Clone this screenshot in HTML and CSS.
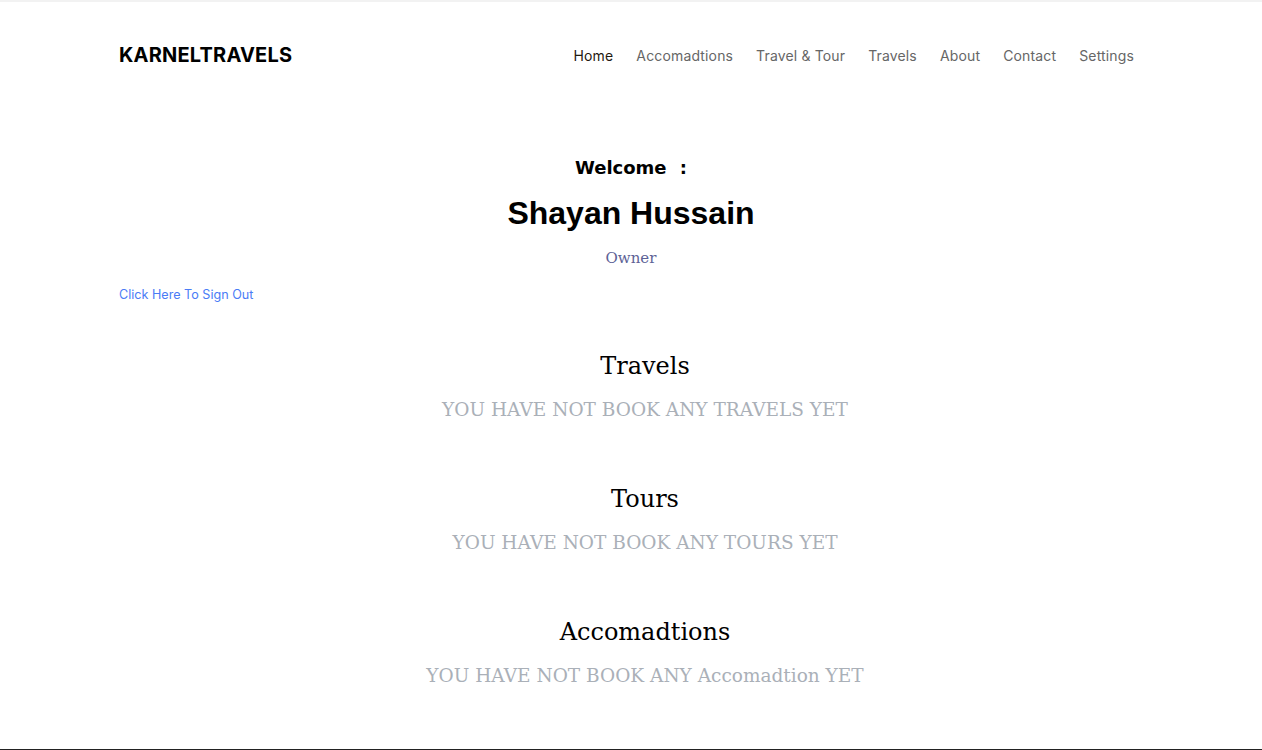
FILE: index.html
```html
<!DOCTYPE html>
<html lang="en">
<head>
<meta charset="utf-8">
<title>KarnelTravels - Profile</title>
<link rel="stylesheet" href="styles.css">
</head>
<body>
<header class="site-header">
  <div class="container header-row">
    <a class="logo" href="#">KARNELTRAVELS</a>
    <nav class="nav">
      <a class="nav-link active" href="#">Home</a>
      <a class="nav-link" href="#">Accomadtions</a>
      <a class="nav-link" href="#">Travel &amp; Tour</a>
      <a class="nav-link" href="#">Travels</a>
      <a class="nav-link" href="#">About</a>
      <a class="nav-link" href="#">Contact</a>
      <a class="nav-link" href="#">Settings</a>
    </nav>
  </div>
</header>
<main class="container profile">
  <h3 class="welcome">Welcome :</h3>
  <h1 class="user-name">Shayan Hussain</h1>
  <p class="role">Owner</p>
  <a class="signout" href="#">Click Here To Sign Out</a>

  <section class="booking">
    <h2 class="booking-title">Travels</h2>
    <p class="booking-empty">YOU HAVE NOT BOOK ANY TRAVELS YET</p>
  </section>
  <section class="booking">
    <h2 class="booking-title">Tours</h2>
    <p class="booking-empty">YOU HAVE NOT BOOK ANY TOURS YET</p>
  </section>
  <section class="booking">
    <h2 class="booking-title">Accomadtions</h2>
    <p class="booking-empty">YOU HAVE NOT BOOK ANY Accomadtion YET</p>
  </section>
</main>
<footer class="site-footer"></footer>
</body>
</html>
```
FILE: styles.css
```css
* { box-sizing: border-box; }
html, body { margin: 0; padding: 0; background: #fff; }
body {
  border-top: 2px solid #f2f2f2;
  font-family: "Inter", "Liberation Sans", sans-serif;
  color: #222;
}
a { text-decoration: none; }
.container { width: 1024px; margin: 0 auto; }

.site-header { height: 106px; }
.header-row {
  height: 100%;
  display: flex;
  align-items: center;
  justify-content: space-between;
}
.logo {
  font-family: "Inter", "Liberation Sans", sans-serif;
  font-weight: 700;
  font-size: 20px;
  letter-spacing: 0.2px;
  color: #000;
}
.nav { display: flex; gap: 23px; padding-right: 9px; }
.nav-link {
  font-family: "Inter", "Liberation Sans", sans-serif;
  font-size: 14px;
  letter-spacing: 0.15px;
  color: #666;
}
.nav-link.active { color: #1f1a10; }

.profile { text-align: center; }
.welcome {
  margin: 47px 0 0;
  font-family: "DejaVu Sans", sans-serif;
  font-weight: 700;
  font-size: 18px;
  word-spacing: 7px;
  line-height: 26px;
  color: #000;
}
.user-name {
  margin: 13px 0 0;
  font-family: "Liberation Sans", Arial, sans-serif;
  font-weight: 700;
  font-size: 32px;
  line-height: 38px;
  color: #000;
}
.role {
  margin: 14px 0 0;
  font-family: "DejaVu Serif", serif;
  font-size: 15px;
  line-height: 24px;
  color: #5d6296;
}
.signout {
  display: block;
  text-align: left;
  margin-top: 15px;
  font-size: 12.6px;
  line-height: 20px;
  color: #4a7cf6;
}
.booking { padding-left: 28px; margin-top: 57px; }
.booking:first-of-type { margin-top: 44px; }
.booking-title {
  margin: 0;
  font-family: "DejaVu Serif", serif;
  font-weight: 400;
  font-size: 24px;
  line-height: 34px;
  color: #000;
}
.booking-empty {
  margin: 12px 0 0;
  font-family: "DejaVu Serif", serif;
  font-size: 18.5px;
  line-height: 30px;
  color: #aab0b8;
}
.site-footer {
  margin-top: 58px;
  border-top: 2px solid #222;
  height: 10px;
}
```
